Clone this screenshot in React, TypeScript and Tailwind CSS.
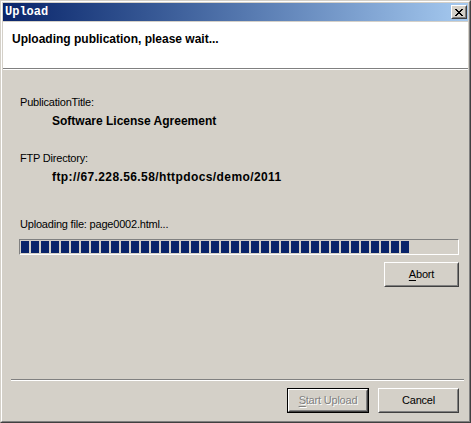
import React from "react";

const font = "font-['Liberation_Sans',Arial,sans-serif]";

function ClassicButton({
  children,
  isDefault = false,
  width,
}: {
  children: React.ReactNode;
  isDefault?: boolean;
  width: string;
}) {
  const face = (
    <div className="h-full border border-t-white border-l-white border-r-[#404040] border-b-[#404040]">
      <div className="h-full border border-t-[#d4d0c8] border-l-[#d4d0c8] border-r-[#808080] border-b-[#808080] flex items-center justify-center">
        {children}
      </div>
    </div>
  );
  return (
    <div className={`${width} h-[25px] bg-[#d4d0c8]`}>
      {isDefault ? <div className="h-full border border-black">{face}</div> : face}
    </div>
  );
}

export default function App() {
  const blocks = Array.from({ length: 39 }, (_, i) => i);

  return (
    <div className={`w-[471px] h-[423px] ${font} text-black select-none`}>
      {/* window frame */}
      <div className="h-full border border-t-[#d4d0c8] border-l-[#d4d0c8] border-r-[#404040] border-b-[#404040]">
        <div className="h-full border border-t-white border-l-white border-r-[#808080] border-b-[#808080] bg-[#d4d0c8] p-px flex flex-col">
          {/* title bar */}
          <div className="h-[18px] shrink-0 flex items-center bg-gradient-to-r from-[#0a246a] to-[#a6caf0]">
            <span className="pl-[2px] text-[12px] leading-[18px] font-bold text-white font-['Liberation_Mono','Courier_New',monospace]">
              Upload
            </span>
            <div className="ml-auto mr-[1px] w-[16px] h-[14px] border border-t-white border-l-white border-r-[#404040] border-b-[#404040] bg-[#d4d0c8]">
              <div className="h-full border border-t-[#d4d0c8] border-l-[#d4d0c8] border-r-[#808080] border-b-[#808080] flex items-center justify-center">
                <svg width="8" height="7" viewBox="0 0 8 7" shapeRendering="crispEdges">
                  <path
                    d="M0 0h2v1h-2zM6 0h2v1h-2zM1 1h2v1h-2zM5 1h2v1h-2zM2 2h4v1h-4zM3 3h2v1h-2zM2 4h4v1h-4zM1 5h2v1h-2zM5 5h2v1h-2zM0 6h2v1h-2zM6 6h2v1h-2z"
                    fill="#000"
                  />
                </svg>
              </div>
            </div>
          </div>

          {/* header */}
          <div className="mt-px h-[47px] shrink-0 bg-white border-b border-b-[#808080]">
            <div className="pt-[11px] pl-[9px] text-[12px] leading-[13px] font-bold">
              Uploading publication, please wait...
            </div>
          </div>
          <div className="h-px bg-white shrink-0" />

          {/* body */}
          <div className="flex-1 flex flex-col pl-[16px] pr-[9px] text-[11px] leading-[13px] tracking-[-0.2px]">
            <div className="mt-[26px] pl-[1px]">PublicationTitle:</div>
            <div className="mt-[6px] pl-[33px] text-[12px] font-bold tracking-normal">
              Software License Agreement
            </div>
            <div className="mt-[24px] pl-[1px]">FTP Directory:</div>
            <div className="mt-[6px] pl-[33px] text-[12px] font-bold tracking-[0.4px]">
              ftp://67.228.56.58/httpdocs/demo/2011
            </div>
            <div className="mt-[34px] pl-[1px]">Uploading file: page0002.html...</div>

            <div className="mt-[8px] w-[440px] h-[16px] border border-t-[#808080] border-l-[#808080] border-r-white border-b-white p-px flex gap-[2px]">
              {blocks.map((b) => (
                <div key={b} className="w-[8px] h-[12px] bg-[#0a246a]" />
              ))}
            </div>

            <div className="mt-[7px] flex justify-end">
              <ClassicButton width="w-[75px]">
                <span>
                  <span className="underline underline-offset-2">A</span>bort
                </span>
              </ClassicButton>
            </div>

            <div className="mt-[92px] -ml-[8px] w-[453px] border-t border-t-[#808080] border-b border-b-white" />

            <div className="mt-[7px] flex justify-end gap-[9px]">
              <ClassicButton width="w-[82px]" isDefault>
                <span className="text-[#808080] [text-shadow:1px_1px_0_#fff]">
                  <span className="underline underline-offset-2">S</span>tart Upload
                </span>
              </ClassicButton>
              <ClassicButton width="w-[81px]">
                <span>Cancel</span>
              </ClassicButton>
            </div>
          </div>
        </div>
      </div>
    </div>
  );
}
